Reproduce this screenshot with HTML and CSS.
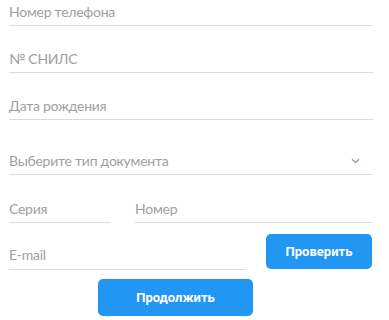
FILE: index.html
```html
<!DOCTYPE html>
<html lang="ru">
<head>
<meta charset="utf-8">
<link rel="stylesheet" href="styles.css">
</head>
<body>
<form class="form">
  <div class="field f-first"><span class="ph">Номер телефона</span></div>
  <div class="field"><span class="ph">№ СНИЛС</span></div>
  <div class="field"><span class="ph">Дата рождения</span></div>
  <div class="field f-select">
    <span class="ph">Выберите тип документа</span>
    <svg class="chev" width="9" height="6" viewBox="0 0 9 6"><path d="M1 1.2 L4.5 4.5 L8 1.2" fill="none" stroke="#8ea3ba" stroke-width="1.3"/></svg>
  </div>
  <div class="row row-doc">
    <div class="field f-series"><span class="ph">Серия</span></div>
    <div class="field f-number"><span class="ph">Номер</span></div>
  </div>
  <div class="row row-mail">
    <div class="field f-mail"><span class="ph">E-mail</span></div>
    <button type="button" class="btn btn-check">Проверить</button>
  </div>
  <div class="row-submit">
    <button type="button" class="btn btn-next">Продолжить</button>
  </div>
</form>
</body>
</html>
```
FILE: styles.css
```css
html, body {
  margin: 0;
  padding: 0;
  background: #ffffff;
}
body {
  font-family: Lato, Roboto, sans-serif;
  width: 389px;
  height: 320px;
  overflow: hidden;
}
.form {
  margin: 0;
  padding: 2px 0 0 9px;
  width: 364px;
  display: flex;
  flex-direction: column;
}
.field {
  display: flex;
  align-items: center;
  justify-content: space-between;
  height: 20px;
  padding-bottom: 3px;
  border-bottom: 1px solid #dadada;
  margin-top: 23px;
}
.f-first {
  margin-top: 0;
}
.ph {
  font-size: 14px;
  line-height: 20px;
  letter-spacing: -0.25px;
  color: #a0a0a0;
  white-space: nowrap;
}
.f-select {
  margin-top: 31px;
  padding-right: 13px;
}
.chev {
  display: block;
  margin-top: -1px;
}
.row {
  display: flex;
  align-items: flex-end;
}
.row-doc {
  margin-top: 24px;
  gap: 24px;
}
.row-doc .field {
  margin-top: 0;
}
.f-series {
  width: 102px;
}
.f-number {
  flex: 1;
}
.row-mail {
  margin-top: 11px;
  gap: 21px;
}
.f-mail {
  margin-top: 0;
  width: 236px;
  padding-bottom: 4px;
}
.btn {
  font-family: Roboto, "Liberation Sans", sans-serif;
  font-weight: 700;
  font-size: 13px;
  color: #ffffff;
  background: #2196f3;
  border: none;
  border-radius: 5px;
  padding: 0;
  cursor: pointer;
}
.btn-check {
  width: 106px;
  height: 35px;
  margin-bottom: 1px;
}
.row-submit {
  margin-top: 9px;
  padding-left: 89px;
}
.btn-next {
  width: 155px;
  height: 37px;
}
```
